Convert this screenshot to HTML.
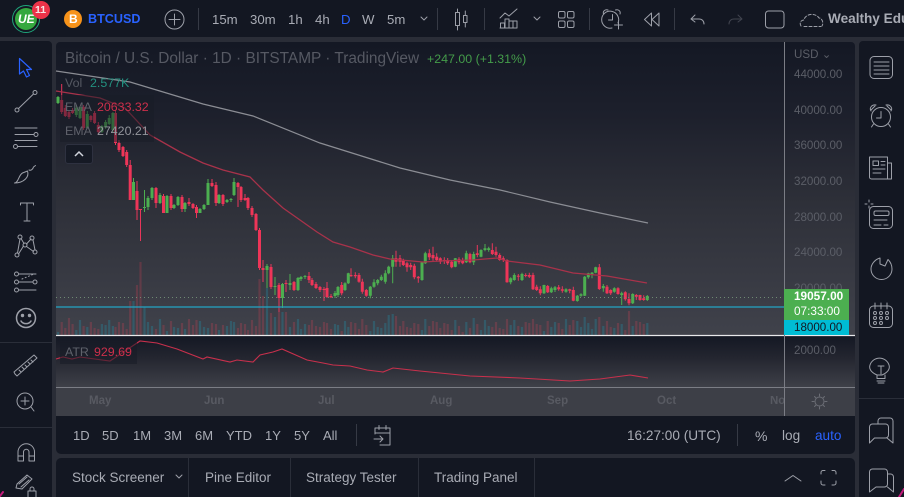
<!DOCTYPE html>
<html><head><meta charset="utf-8"><style>
html,body{margin:0;padding:0;width:904px;height:497px;overflow:hidden;background:#2a2d37;font-family:"Liberation Sans",sans-serif}
#w{position:absolute;left:0;top:0;width:904px;height:497px;filter:blur(.3px)}
.a{position:absolute;white-space:nowrap;line-height:1}
.p{position:absolute}
.t{font-size:13.2px;color:#a9acb5;top:13px}
.r{font-size:13px;color:#a9acb5;top:429px}
.b{font-size:13.5px;color:#a9acb5;top:471px}
.y{font-size:11.6px;color:#5b5e67;left:794px}
.x{font-size:11.5px;color:#585a62;top:396px;font-weight:bold}
.s{position:absolute;width:1px;background:#2a2e39}
svg{position:absolute;left:0;top:0}
</style></head><body><div id="w">
<!-- panels -->
<div class="p" style="left:0;top:0;width:904px;height:37px;background:#131722"></div>
<div class="p" style="left:0;top:41px;width:52px;height:456px;background:#131722;border-top-right-radius:4px"></div>
<div class="p" style="left:859px;top:41px;width:45px;height:456px;background:#131722;border-top-left-radius:4px"></div>
<div class="p" style="left:56px;top:42px;width:799px;height:294px;background:linear-gradient(#141824,#1d202c 25%,#2e3039 55%,#40424b);border-top-left-radius:4px;border-top-right-radius:4px"></div>
<div class="p" style="left:56px;top:336px;width:799px;height:52px;background:linear-gradient(#141824,#23252f 40%,#3f4149)"></div>
<div class="p" style="left:56px;top:388px;width:799px;height:28px;background:#3d3f47"></div>
<div class="p" style="left:56px;top:416px;width:799px;height:38px;background:#131722;border-radius:0 0 5px 5px"></div>
<div class="p" style="left:56px;top:458px;width:799px;height:39px;background:#131722;border-radius:5px 5px 0 0"></div>
<!-- chart -->
<svg id="c" width="904" height="497" viewBox="0 0 904 497" fill="none">
<defs><clipPath id="cp"><rect x="56" y="42" width="728" height="293"/></clipPath></defs>
<g id="g" clip-path="url(#cp)"></g>
<path d="M56 297.5H784" stroke="#6f8a72" stroke-dasharray="1 3"/>
<path d="M56 307H784" stroke="#22a5c4" stroke-width="1.2"/>
<path d="M56 71 130 82 203 104 253 116 320 143 400 168 450 180 500 190 550 202 600 213 648 223" stroke="#8b8d94" stroke-width="1.2"/>
<path d="M56 91 100 98 125 108 150 135 180 152 203 163 223 170 250 177 263 190 283 208 317 232 333 242 350 247 373 255 390 259 423 262 440 261 473 260 497 258 507 261 540 265 573 273 607 276 647 283" stroke="#a8324a" stroke-width="1.3"/>
<path d="M56 359 63 357 72 359 80 357 110 361 122 353 140 341 157 343 177 349 203 359 207 357 230 362 237 360 253 362 260 355 273 352 282 349 307 360 323 363 333 365 350 366 367 370 383 372 393 368 420 371 470 376 520 378 570 381 600 379 630 375 648 378" stroke="#c8304c" stroke-width="1.1"/>
<path d="M56 335.500H855" stroke="#e8e8ea" stroke-width="1.2"/>
<path d="M56 387.500H855" stroke="#7b7d85"/>
<path d="M784.500 42V416" stroke="#7b7d85"/>
</svg>
<!-- legend boxes -->
<div class="p" style="left:60px;top:95px;width:94px;height:47px;background:rgba(24,27,38,.5)"></div>
<div class="p" style="left:60px;top:342px;width:77px;height:22px;background:rgba(24,27,38,.55)"></div>
<div class="p" style="left:65px;top:144px;width:28px;height:20px;background:#161a25;border:1px solid #2e3140;border-radius:3px;box-sizing:border-box"></div>
<svg width="904" height="497" fill="none"><path d="M75 156l4-4 4 4" stroke="#d1d4dc" stroke-width="1.5"/></svg>
<div class="a" style="left:65px;top:51px;font-size:15.4px;color:#565963">Bitcoin / U.S. Dollar · 1D · BITSTAMP · TradingView</div>
<div class="a" style="left:427px;top:53px;font-size:12.4px;color:#449c4a">+247.00 (+1.31%)</div>
<div class="a" style="left:65px;top:77px;font-size:12.4px;color:#565963">Vol</div>
<div class="a" style="left:90px;top:77px;font-size:12.4px;color:#23907f">2.577K</div>
<div class="a" style="left:65px;top:101px;font-size:12.4px;color:#5f626b">EMA</div>
<div class="a" style="left:97px;top:101px;font-size:12.4px;color:#cc2f4b">20633.32</div>
<div class="a" style="left:65px;top:125px;font-size:12.4px;color:#5f626b">EMA</div>
<div class="a" style="left:97px;top:125px;font-size:12.4px;color:#93959c">27420.21</div>
<div class="a" style="left:65px;top:346px;font-size:12.4px;color:#5f626b">ATR</div>
<div class="a" style="left:94px;top:346px;font-size:12.4px;color:#cc2f4b">929.69</div>
<!-- axis -->
<div class="a y" style="top:49px">USD ⌄</div>
<div class="a y" style="top:69px">44000.00</div>
<div class="a y" style="top:105px">40000.00</div>
<div class="a y" style="top:140px">36000.00</div>
<div class="a y" style="top:176px">32000.00</div>
<div class="a y" style="top:212px">28000.00</div>
<div class="a y" style="top:247px">24000.00</div>
<div class="a y" style="top:283px">20000.00</div>
<div class="p" style="left:784px;top:289px;width:65px;height:31px;background:#4caf50"></div>
<div class="p" style="left:784px;top:320px;width:65px;height:15px;background:#00bcd4"></div>
<div class="a" style="left:794px;top:291px;font-size:11.8px;color:#fff;font-weight:bold">19057.00</div>
<div class="a" style="left:794px;top:306px;font-size:11.8px;color:#fff">07:33:00</div>
<div class="a" style="left:794px;top:322px;font-size:11.6px;color:#131722">18000.00</div>
<div class="a y" style="top:345px">2000.00</div>
<div class="a x" style="left:89px">May</div><div class="a x" style="left:204px">Jun</div><div class="a x" style="left:318px">Jul</div><div class="a x" style="left:430px">Aug</div><div class="a x" style="left:547px">Sep</div><div class="a x" style="left:657px">Oct</div><div class="a x" style="left:770px;width:14px;overflow:hidden">Nov</div>
<!-- top text -->
<div class="a" style="left:88px;top:12.500px;font-size:12.600px;font-weight:bold;color:#2962ff">BTCUSD</div>
<div class="a t" style="left:212px">15m</div><div class="a t" style="left:250px">30m</div><div class="a t" style="left:288px">1h</div><div class="a t" style="left:315px">4h</div><div class="a t" style="left:341px;color:#2962ff">D</div><div class="a t" style="left:362px">W</div><div class="a t" style="left:387px">5m</div>
<div class="a" style="left:828px;top:12px;font-size:13.6px;font-weight:bold;color:#a9acb5">Wealthy Edu</div>
<!-- range bar -->
<div class="a r" style="left:73px">1D</div><div class="a r" style="left:102px">5D</div><div class="a r" style="left:133px">1M</div><div class="a r" style="left:164px">3M</div><div class="a r" style="left:195px">6M</div><div class="a r" style="left:226px">YTD</div><div class="a r" style="left:265px">1Y</div><div class="a r" style="left:294px">5Y</div><div class="a r" style="left:323px">All</div>
<div class="a r" style="left:627px;font-size:13.6px">16:27:00 (UTC)</div><div class="a r" style="left:755px;font-size:14px">%</div><div class="a r" style="left:782px;font-size:13.6px">log</div><div class="a r" style="left:815px;font-size:13.6px;color:#2962ff">auto</div>
<!-- bottom -->
<div class="a b" style="left:72px">Stock Screener</div><div class="a b" style="left:205px">Pine Editor</div><div class="a b" style="left:306px">Strategy Tester</div><div class="a b" style="left:434px">Trading Panel</div>
<div class="s" style="left:188px;top:458px;height:39px"></div><div class="s" style="left:290px;top:458px;height:39px"></div><div class="s" style="left:418px;top:458px;height:39px"></div><div class="s" style="left:534px;top:458px;height:39px"></div>
<div class="s" style="left:198px;top:8px;height:22px;background:#363a45"></div><div class="s" style="left:437px;top:8px;height:22px;background:#363a45"></div><div class="s" style="left:484px;top:8px;height:22px;background:#363a45"></div><div class="s" style="left:589px;top:8px;height:22px;background:#363a45"></div><div class="s" style="left:674px;top:8px;height:22px;background:#363a45"></div>
<div class="s" style="left:356px;top:424px;height:22px;background:#363a45"></div><div class="s" style="left:737px;top:424px;height:22px;background:#363a45"></div>
<div class="p" style="left:0;top:342px;width:52px;height:1px;background:#2a2e39"></div><div class="p" style="left:0;top:427px;width:52px;height:1px;background:#2a2e39"></div><div class="p" style="left:859px;top:398px;width:45px;height:1px;background:#2a2e39"></div>
<!-- logo -->
<div class="p" style="left:12px;top:5px;width:28px;height:28px;border-radius:50%;border:1px solid #1fa57a;box-sizing:border-box"></div>
<div class="p" style="left:15px;top:8px;width:22px;height:22px;border-radius:50%;background:#35a83f"></div>
<div class="a" style="left:18px;top:13px;font-size:12px;font-weight:bold;font-style:italic;color:#fff">UE</div>
<div class="p" style="left:32px;top:1px;width:18px;height:18px;border-radius:50%;background:#ec3349"></div>
<div class="a" style="left:35px;top:4.500px;font-size:10.500px;font-weight:bold;color:#f6e6e6">11</div>
<div class="p" style="left:64px;top:10px;width:18px;height:18px;border-radius:50%;background:#f7931a"></div>
<div class="a" style="left:69px;top:13px;font-size:12px;font-weight:bold;color:#fff">B</div>
<!-- icons -->
<svg width="904" height="497" fill="none" stroke="#9da0a9" stroke-width="1" stroke-linecap="round" stroke-linejoin="round">
<circle cx="174.500" cy="19.500" r="9.500"/><path d="M174.500 14v11M169 19.500h11"/>
<path d="M421 17l3 3 3-3"/>
<!-- candles -->
<path d="M455.500 12.500h4v13h-4zM457.500 9v3.500M457.500 25.500V30M463.500 15.500h3.500v7h-3.500zM465.300 11v4.500M465.300 22.500V27"/>
<!-- indicators -->
<path d="M500 18l5-5 4 3 8-7M500.500 28v-5h4v5M505 28V19h4v9M509 28v-7h8v7M500 28h17M513 21v7"/>
<path d="M534 17l3 3 3-3"/>
<rect x="558.500" y="11.500" width="6.500" height="6.500" rx="1.500"/><rect x="567.500" y="11.500" width="6.500" height="6.500" rx="1.500"/><rect x="558.500" y="21" width="6.500" height="6.500" rx="1.500"/><rect x="567.500" y="21" width="6.500" height="6.500" rx="1.500"/>
<!-- alarm add -->
<path d="M618 23a8.500 8.500 0 1 0-6 5M612.500 14.500v5.500h-4M603.500 14c-1-3 2-5 4.500-4M620 14c1-3-2-5-4.500-4M618.500 20.500v8.500M614.500 25h8"/>
<!-- rewind -->
<path d="M651.500 13l-7 6.500 7 6.500zM659 13l-7 6.500 7 6.500z"/>
<!-- undo redo -->
<path d="M695 15l-4 4 4 3M691 19h8c3 0 5 2 5 5"/>
<path d="M738 15l4 4-4 3M742 19h-8c-3 0-5 2-5 5" stroke="#41444f"/>
<rect x="765.500" y="11" width="18.500" height="17" rx="3"/>
<path d="M801 26c-2-3 0-6 3-6 1-6 11-8 15-2 3 0 5 5 3 8M804 26.500h17" stroke-dasharray="3 2"/>
<!-- left -->
<path d="M19.500 58.500v15.500l4-3 3 6 3-1.500-3-6h5z" stroke="#2962ff" stroke-width="1.2"/>
<circle cx="17" cy="110" r="2"/><circle cx="35" cy="92.500" r="2"/><path d="M18.500 108.500l15-14.500"/>
<path d="M15 128h22M15 134.500h19M15 140.500h22M18 146.500h19"/><circle cx="36" cy="134.500" r="2"/><circle cx="15.500" cy="146.500" r="2"/>
<path d="M14.500 183c4 0 4-8 8-10l5-2c1 3 0 6-2 8-3 3-7 4-11 4zM29 170c2 1 4-1 4.500-3l2-1.500" />
<path d="M20.500 203h13M27 203v18M24 221h6M20.500 203v2M33.500 203v2"/>
<circle cx="17" cy="255" r="2"/><circle cx="20" cy="237" r="2"/><circle cx="25" cy="245" r="2"/><circle cx="32" cy="238" r="2"/><circle cx="35" cy="252" r="2"/><path d="M17.500 253l2.500-14M21 238.500l3 5M26.500 244l4.500-5M33 240l2 10M26.500 246.500l7 5M23.500 246l-5 8"/>
<circle cx="16.500" cy="274" r="2"/><circle cx="16.500" cy="282" r="2"/><circle cx="35" cy="282" r="2"/><circle cx="16.500" cy="290" r="2"/><path d="M19 274h17M19 282h14M19 290h17" /><path d="M22 279l12-5" stroke-dasharray="1 2.500"/>
<circle cx="26" cy="318" r="9.500" stroke-width="1.500"/><circle cx="22.500" cy="315.500" r="1.200" fill="#9da0a9"/><circle cx="29.500" cy="315.500" r="1.200" fill="#9da0a9"/><path d="M21 321c2 3.500 8 3.500 10 0" stroke-width="1.500"/>
<path d="M15 374l-1-2 20-17 3 3-20 18zM19 370l2 2M22 367l2 2M25 365l2 2M28 362l2 2M31 360l2 2"/>
<circle cx="25" cy="401" r="8"/><path d="M25 397v8M21 401h8M31 407l3 4"/>
<path d="M18 461v-9a8 8 0 0 1 16.500 0v9h-5.500v-9a2.700 2.700 0 0 0-5.500 0v9zM18 456h5.500M29 456h5.500"/>
<path d="M16 488l1-4 10-9 5 4-10 10zM19 484l8-7M21 487l8-7M28 491v6M36 491v6M28 491h8M30 491v-2a2 2 0 0 1 4 0v2"/>
<!-- range/bottom -->
<path d="M375 428h15v17h-10M375 428v6M375 433h15M379 425.500v4M386 425.500v4M374 439h9M380 436l3 3-3 3"/>
<path d="M176 475l3 3 3-3"/>
<path d="M785 481l8-5.500 8 5.500"/>
<path d="M821 474v-1.500a2 2 0 0 1 2-2h2M832 470.500h2a2 2 0 0 1 2 2v1.500M836 481v2a2 2 0 0 1-2 2h-2M825 485h-2a2 2 0 0 1-2-2v-2"/>
<g stroke="#6b6d75"><circle cx="819.500" cy="401.500" r="4.500"/><path d="M819.500 394v2M819.500 407v2M812 401.500h2M825 401.500h2M814.500 396.500l1.500 1.500M823 405l1.500 1.500M824.500 396.500l-1.500 1.500M816 405l-1.500 1.500"/></g>
<!-- right -->
<rect x="870" y="56.500" width="22.500" height="22" rx="4"/><path d="M874 62h15M874 66h15M874 70h15M874 74h15"/>
<circle cx="881" cy="117" r="9.500"/><path d="M881 111.500v6.500h-4.500M871 111c-2-3 1-7 5-6M891 111c2-3-1-7-5-6M873.500 124l-2 3M888.500 124l2 3M871 110l4-4M891 110l-4-4"/>
<path d="M869.500 157h18v22h-16a2 2 0 0 1-2-2zM887.500 163h4v16h-4M873 161h5.500v4.500H873zM881 161.500h4M881 165h4M873 169h12M873 173h8"/>
<rect x="869.500" y="206.500" width="23" height="22" rx="4"/><rect x="874" y="211" width="15" height="4.500" rx="1.500"/><path d="M874 220h13M874 225h7M884 225h4M869 202v-2M869 208v-2M865 204h2M871 204h2"/>
<path d="M880 258c-5 1.500-9 6-9 11a10.500 10.500 0 0 0 21 0c0-4-1.500-7-4-9.500l-3 6.500-5-2z"/>
<rect x="869.500" y="306" width="23" height="21.500" rx="4"/><path d="M875 303v6M881 303v6M887 303v6"/><circle cx="875" cy="313" r="1.500"/><circle cx="881" cy="313" r="1.500"/><circle cx="887" cy="313" r="1.500"/><circle cx="875" cy="318" r="1.500"/><circle cx="881" cy="318" r="1.500"/><circle cx="887" cy="318" r="1.500"/><circle cx="875" cy="323" r="1.500"/><circle cx="881" cy="323" r="1.500"/>
<path d="M877 375c-7-3-8-7-7-10a10 10 0 0 1 19 0c1 3 0 7-7 10zM877 375v3.500h8V375M877 381h8M878 383h6M881 374v-8M878 366h6"/>
<path d="M869.500 443V427a3 3 0 0 1 3-3h13a3 3 0 0 1 3 3v8a3 3 0 0 1-3 3h-11zM878 424v-3a3 3 0 0 1 3-3h9a3 3 0 0 1 3 3v22l-6-5"/>
<path d="M869.500 492V472a3 3 0 0 1 3-3h12a3 3 0 0 1 3 3v12a3 3 0 0 1-3 3H876zM887.500 474h3a3 3 0 0 1 3 3v15l-6-5"/>
<path d="M0 496l3-4M904 489l-5 8" stroke="#c21a7a" stroke-width="2"/>
</svg>
</div>
<script>
(function(){
var A=[[103,97],[100,112,84,114],[108,116],[112,117],[110,113],[115,108],[118,107],[107,128],[128,114],[116,120],[113,123],[125,132],[132,126],[127,122],[124,118],[130,113]];
var a=[];A.forEach(function(c,i){a.push([58+i*3.66].concat(c))});
a=a.concat([[115.5,113,143,110,145],[119,143,150],[123,147,156],[126.7,152,165],[130.2,165,200,160,200]]);
var B=[[133.5,200,182,178,200],[137,191,210,181,220],[140.5,209,210,209,241],[144.5,208,207,190,212],[148,207,198,196,210],[152,198,188,187,200],[156,188,203,187,208],[160,203,195,193,204],[163.500,196,213,194,213],[167,213,196,195,213],[171,196,208,194,210],[174,208,205,204,209],[178,205,197,196,206],[182,197,209,195,212],[185,209,203,202,212],[189,202,204,198,206],[193,204,208,203,209],[196.500,207,213,205,218],[200,213,209,208,213],[204,209,205,204,210],[208,205,183,179,205],[212,183,186,179,187],[216,185,203,182,206],[219,203,195,194,204],[223,195,204,194,206],[227,202,200,199,203],[231,200,199,198,202],[234,195,182,178,196],[238,183,187,182,207],[241,187,200,186,202],[245,198,200,194,201],[248,198,208,197,210],[252,208,215,206,217],[256,214,230,213,231],[259.500,230,268,228,270],[263,268,270,260,282],[267,270,266,264,288],[271,267,287,264,289],[275,287,286,277,295],[279,285,298,283,312],[282.500,298,284,283,308],[286,283,284,280,292],[290,285,283,274,290],[294,282,290,281,291],[298,290,278,277,291],[301,279,277,276,281],[305,277,276,275,279],[309,276,280,272,283],[312,280,285,278,286],[316,284,288,282,289],[320,287,290,286,292],[324,289,290,287,301],[327,288,297,282,298],[331,296,296,294,298],[335,296,293,291,298],[338,295,287,286,297]];
a=a.concat(B);
var C=[[5,165,190],[15,180,160],[25,160,130,128,162],[33,135,137,115,140],[46,135,137,127,145],[57,135,155],[67,155,185],[79,180,197],[91,197,170,168,205],[102,170,157],[113,160,150],[124,150,140],[136,155,130],[146,130,110],[158,110,85,75,160],[168,85,95,62,110],[180,85,95,75,110],[190,92,105],[201,100,112,95,125],[212,105,112,98,120],[223,107,142],[235,140,145,138,158],[246,150,97,96,152],[256,100,70,65,102],[268,70,82,58,90],[279,75,85,50,92],[290,80,90,70,95],[301,85,95,82,102],[313,90,94,82,102],[323,90,100,84,105],[335,95,112,90,115],[346,110,85,84,112],[357,88,97],[368,92,100],[379,97,70,62,99],[390,72,97,68,100],[401,97,72,65,105],[412,70,75,45,82],[423,80,60,58,82],[435,60,55,42,64],[446,60,55,50,65],[457,60,72,40,75],[468,65,75,50,80],[479,75,90,70,92],[490,85,90],[501,90,157,88,158],[512,157,145],[523,150,135,130,152],[535,137,140,132,152],[546,150,132,128,153],[557,135,138,130,142],[568,135,140,128,144],[579,135,178,128,180],[590,170,180],[601,178,190],[612,190,165,164,192],[623,168,187,165,189],[634,187,175,170,189],[645,180,172,168,186],[656,172,178,165,182],[667,178,182],[678,185,178],[689,178,182,176,190],[700,180,212,170,214],[712,213,197,195,215],[723,197,193,190,200],[734,197,140,138,198],[745,142,130,128,146],[756,135,128,126,145],[767,128,112,110,130],[778,112,177,102,180],[790,175,168,162,185],[801,170,190,165,192],[812,180,190,178,195],[823,185,175,172,188],[834,175,192,172,194],[845,195,190,185,225],[856,187,208,184,212],[867,207,220,190,226],[878,220,192,190,222],[889,195,200,192,210],[900,195,210,194,212],[911,205,210,196,212],[922,210,198,195,213]];
C.forEach(function(c){var r=[340+c[0]/3];for(var i=1;i<c.length;i++)r.push(230+c[i]/3);a.push(r)});
var ov={130:34,133:34,137:50,140:73,144:28,259:56,263:39,267:47,271:22,275:18,279:23,283:23,286:23,153:9,196:15,297:16,390:20,393:21,396:19,424:16,507:16,532:16,574:15,585:18,600:18,629:24,644:11};
var h='',gb='',gw='',rb='',rw='';
a.forEach(function(c,i){
var x=c[0],o=c[1],e=c[2],t=Math.min(o,e),b=Math.max(o,e);
if(b-t<1){b=t+1.2}
var hi=c.length>3?c[3]:t-1-(i%3),lo=c.length>4?c[4]:b+1+(i%2);
var g=e<o;
var X=x.toFixed(1);
var wk='M'+X+' '+hi.toFixed(1)+'V'+lo.toFixed(1);
var bd='M'+X+' '+t.toFixed(1)+'V'+b.toFixed(1);
if(g){gw+=wk;gb+=bd}else{rw+=wk;rb+=bd}
var v=3+((i*7)%11)+((i*3)%5);
for(var k in ov){if(Math.abs(k-x)<1.9)v=ov[k]}
h+='<rect x="'+(x-1.1).toFixed(1)+'" y="'+(335-v)+'" width="2.2" height="'+v+'" fill="'+(g?'rgba(30,150,175,.3)':'rgba(242,64,88,.22)')+'"/>';
});
document.getElementById('g').innerHTML=h+
'<path d="'+rw+'" stroke="#e8365a" stroke-width="1"/><path d="'+gw+'" stroke="#4caf50" stroke-width="1"/>'+
'<path d="'+rb+'" stroke="#ee3558" stroke-width="3"/><path d="'+gb+'" stroke="#4caf50" stroke-width="3"/>';
})();
</script>
</body></html>
